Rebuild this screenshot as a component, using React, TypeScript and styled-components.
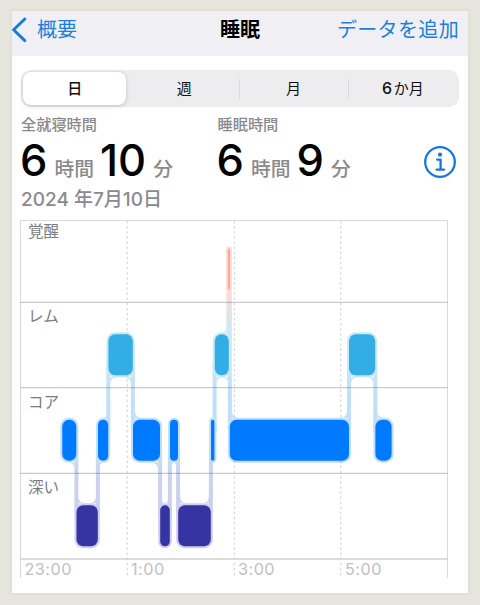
import React from 'react'
import styled, { createGlobalStyle } from 'styled-components'

const GlobalStyle = createGlobalStyle`
  * {
    box-sizing: border-box;
  }
  body {
    margin: 0;
    background: #e5e4dd;
    font-family: Inter, 'Noto Sans CJK JP', sans-serif;
  }
`

const Page = styled.div`
  width: 480px;
  height: 605px;
  padding: 11px 12px 12px;
  background: #e5e4dd;
`

const Screen = styled.main`
  height: 582px;
  background: #fff;
  box-shadow: 0 0 2px 1px #dcdbd5;
  overflow: hidden;
`

const Header = styled.header`
  display: grid;
  grid-template-columns: 1fr auto 1fr;
  align-items: center;
  height: 45px;
  padding-bottom: 8px;
  background: #f0eff4;
`

const NavButton = styled.button<{ $end?: boolean }>`
  display: flex;
  align-items: center;
  justify-self: ${(p) => (p.$end ? 'end' : 'start')};
  gap: 10px;
  margin-right: ${(p) => (p.$end ? 9 : 0)}px;
  padding: 0;
  border: 0;
  background: none;
  color: #1c7fe0;
  font: 400 20px/24px Inter, 'Noto Sans CJK JP', sans-serif;
  letter-spacing: ${(p) => (p.$end ? '0.35px' : 'normal')};
  white-space: nowrap;
`

const Title = styled.h1`
  margin: 0;
  font-size: 20px;
  line-height: 24px;
  font-weight: 700;
`

const Tabs = styled.div`
  display: flex;
  align-items: center;
  width: 438px;
  height: 37px;
  margin: 14px 0 0 9px;
  padding: 2px;
  border-radius: 10px;
  background: #ededef;
`

const Tab = styled.button<{ $active?: boolean }>`
  width: ${(p) => (p.$active ? 104 : 109)}px;
  height: 33px;
  padding: 0;
  border: 0;
  border-radius: 8px;
  background: ${(p) => (p.$active ? '#fff' : 'none')};
  box-shadow: ${(p) => (p.$active ? '0 1px 4px rgba(0, 0, 0, 0.2)' : 'none')};
  color: #111;
  font: ${(p) => (p.$active ? 500 : 400)} 15px/33px Inter, 'Noto Sans CJK JP', sans-serif;
`

const TabNumber = styled.span`
  margin-right: 1.5px;
  font-size: 16px;
  font-weight: 500;
`

const Divider = styled.span`
  width: 1px;
  height: 20px;
  background: #d9d9dc;

  &:first-of-type {
    width: 4px;
    background: transparent;
  }
`

const Summary = styled.section`
  display: flex;
  height: 80px;
  padding: 8px 11px 0 9px;
`

const Stat = styled.div`
  width: 196.5px;
`

const StatLabel = styled.div`
  color: #8a8a8e;
  font-size: 15.2px;
  line-height: 20px;
  font-weight: 500;
`

const StatValue = styled.div`
  display: flex;
  align-items: baseline;
  height: 46px;
  line-height: 46px;
  margin-top: 2px;
`

const Num = styled.span`
  margin-left: -1px;
  font-size: 43.5px;
  font-weight: 500;
`

const Unit = styled.span`
  margin: 0 7px;
  color: #8a8a8e;
  font-size: 19.8px;
  font-weight: 500;
`

const InfoButton = styled.button`
  height: 34px;
  margin: 30px 0 0 auto;
  padding: 0;
  border: 0;
  background: none;
`

const DateLabel = styled.div`
  height: 26px;
  padding-left: 9px;
  color: #8a8a8e;
  font-size: 19px;
  line-height: 26px;
  font-weight: 500;
`

const Chart = styled.svg`
  display: block;
  margin: 7px 0 0 8px;
`

const RowLabel = styled.text`
  fill: #7c7c80;
  font-size: 15.5px;
`

const HourLabel = styled.text`
  fill: #c0c0c3;
  font-size: 16.2px;
  letter-spacing: 0.5px;
`

type Stage = 'awake' | 'rem' | 'core' | 'deep'

// top edge of the bars of each stage
const tops: Record<Stage, number> = { awake: 28.5, rem: 114.3, core: 199.8, deep: 285.3 }
const colors: Record<Stage, string> = {
  awake: '#f5a99c',
  rem: '#32ade6',
  core: '#007aff',
  deep: '#3634a3',
}
const BAR = 41

// [stage, start x, end x]
const sleep: [Stage, number, number][] = [
  ['core', 42.3, 56.3],
  ['deep', 56.5, 77.8],
  ['core', 78, 88.2],
  ['rem', 88.4, 112.8],
  ['core', 113, 140],
  ['deep', 140.2, 149.8],
  ['core', 150, 158],
  ['deep', 158.2, 190.8],
  ['core', 191, 194.4],
  ['rem', 194.8, 208.8],
  ['awake', 208, 210],
  ['core', 209.8, 329],
  ['rem', 329, 355.2],
  ['core', 355.4, 371.6],
]

const rows = [
  { label: '覚醒', y: 17 },
  { label: 'レム', y: 102 },
  { label: 'コア', y: 187.5 },
  { label: '深い', y: 273 },
]

const hours = [
  { label: '23:00', x: 4.5 },
  { label: '1:00', x: 111 },
  { label: '3:00', x: 218 },
  { label: '5:00', x: 325 },
]

// rounded inner corner where a link meets a bar
function Fillet({ x, y, r, dx, dy }: { x: number; y: number; r: number; dx: number; dy: number }) {
  if (r <= 0) return null
  return <path d={`M${x} ${y} h${dx * r} Q${x} ${y} ${x} ${y + dy * r} Z`} />
}

function Link({ i }: { i: number }) {
  const a = sleep[i]
  const b = sleep[i + 1]
  const x = (a[2] + b[1]) / 2
  const aUp = tops[a[0]] < tops[b[0]]
  const up = aUp ? a : b
  const low = aUp ? b : a
  const upY = tops[up[0]] + BAR + 2
  const lowY = tops[low[0]] - 2
  const r = (s: [Stage, number, number]) => Math.min(7, (s[2] - s[1] - 4) / 2 + 1)
  const side = aUp ? -1 : 1
  return (
    <>
      <rect x={x - 2} y={upY - 14} width={4} height={lowY - upY + 28} />
      <Fillet x={x + side * 2} y={upY} r={r(up)} dx={side} dy={1} />
      <Fillet x={x - side * 2} y={lowY} r={r(low)} dx={-side} dy={-1} />
    </>
  )
}

function SleepChart() {
  return (
    <Chart width="430" height="362" viewBox="0 0 430 362">
      <defs>
        <linearGradient id="stages" gradientUnits="userSpaceOnUse" x1="0" y1="0" x2="0" y2="362">
          <stop offset="0.19" stopColor="#ff7a5c" />
          <stop offset="0.31" stopColor="#32ade6" />
          <stop offset="0.41" stopColor="#32ade6" />
          <stop offset="0.47" stopColor="#1885ea" />
          <stop offset="0.54" stopColor="#0c88fa" />
          <stop offset="0.65" stopColor="#0c88fa" />
          <stop offset="0.7" stopColor="#3f55bd" />
          <stop offset="0.86" stopColor="#4a3fc4" />
        </linearGradient>
      </defs>
      <g fill="none" stroke="#d9d9db">
        <path d="M0.5 358 V0.5 H427.5 V358" />
        <path d="M0 339 H428" stroke="#d0d0d2" strokeWidth="1.4" />
        <path d="M0 82.3 H428 M0 167.7 H428 M0 253.3 H428" stroke="#bdbdc0" />
        <path
          d="M107.2 1 V357 M214.3 1 V357 M320.8 1 V357"
          stroke="#cfcfd1"
          strokeDasharray="2.5 2.6"
        />
      </g>
      <g fill="url(#stages)" opacity="0.26">
        {sleep.map(([stage, x1, x2], i) => (
          <rect
            key={i}
            x={x1 - 2}
            y={tops[stage] - 2}
            width={x2 - x1 + 4}
            height={BAR + 4}
            rx={Math.min(8.5, (x2 - x1 + 4) / 2)}
          />
        ))}
        {sleep.slice(1).map((_, i) => (
          <Link key={i} i={i} />
        ))}
        <Fillet x={207.8} y={157.3} r={6} dx={-1} dy={1} />
      </g>
      {sleep.map(([stage, x1, x2], i) => (
        <rect
          key={i}
          x={x1}
          y={tops[stage]}
          width={x2 - x1}
          height={BAR}
          rx={Math.min(6.8, (x2 - x1) / 2)}
          fill={colors[stage]}
        />
      ))}
      {rows.map((row) => (
        <RowLabel key={row.label} x={8} y={row.y}>{row.label}</RowLabel>
      ))}
      {hours.map((hour) => (
        <HourLabel key={hour.label} x={hour.x} y={355}>{hour.label}</HourLabel>
      ))}
    </Chart>
  )
}

function App() {
  return (
    <Page>
      <GlobalStyle />
      <Screen>
        <Header>
          <NavButton>
            <svg width="15" height="26" viewBox="0 0 15 26" fill="none">
              <path d="M12.8 2 L1.6 12.8 L12.8 23.6" stroke="#1779e4" strokeWidth="2.9" strokeLinecap="round" strokeLinejoin="round" />
            </svg>
            概要
          </NavButton>
          <Title>睡眠</Title>
          <NavButton $end>データを追加</NavButton>
        </Header>
        <Tabs>
          <Tab $active>日</Tab>
          <Divider />
          <Tab>週</Tab>
          <Divider />
          <Tab>月</Tab>
          <Divider />
          <Tab><TabNumber>6</TabNumber>か月</Tab>
        </Tabs>
        <Summary>
          <Stat>
            <StatLabel>全就寝時間</StatLabel>
            <StatValue>
              <Num>6</Num>
              <Unit>時間</Unit>
              <Num>10</Num>
              <Unit>分</Unit>
            </StatValue>
          </Stat>
          <Stat>
            <StatLabel>睡眠時間</StatLabel>
            <StatValue>
              <Num>6</Num>
              <Unit>時間</Unit>
              <Num>9</Num>
              <Unit>分</Unit>
            </StatValue>
          </Stat>
          <InfoButton>
            <svg width="34" height="34" viewBox="0 0 34 34" fill="none" stroke="#1577df" strokeWidth="2.3" strokeLinecap="round" strokeLinejoin="round">
              <circle cx="17" cy="17" r="14.8" />
              <path d="M14.2 14.7 H17.6 V24.6 M13.6 24.6 H21" />
              <circle cx="17" cy="9.7" r="2.1" fill="#1577df" stroke="none" />
            </svg>
          </InfoButton>
        </Summary>
        <DateLabel>2024 年7月10日</DateLabel>
        <SleepChart />
      </Screen>
    </Page>
  )
}

export default App
